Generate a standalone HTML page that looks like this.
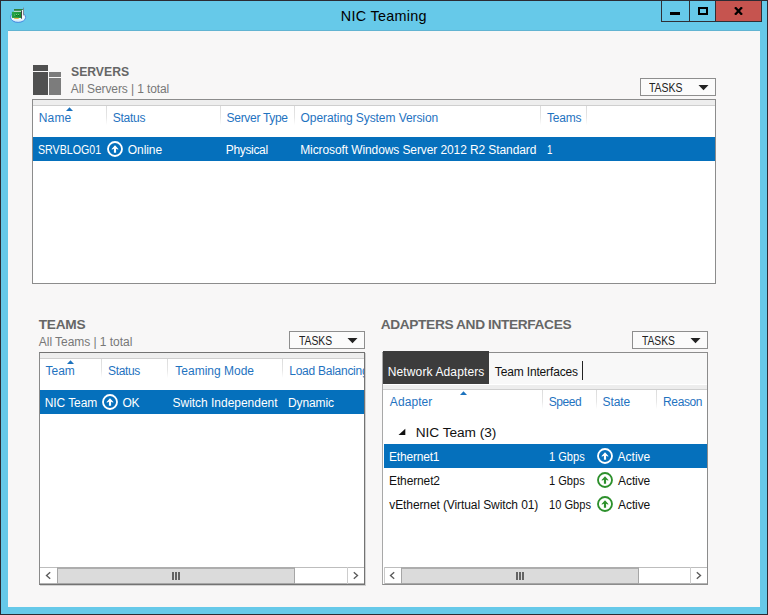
<!DOCTYPE html>
<html><head><meta charset="utf-8"><title>NIC Teaming</title>
<style>
html,body{margin:0;padding:0;}
body{width:768px;height:615px;overflow:hidden;position:relative;background:#66c9e9;font-family:"Liberation Sans",sans-serif;}
body>div,body>svg,body>span{position:absolute;display:block;}
.t{white-space:pre;line-height:20px;height:20px;}
</style></head><body>
<div style="left:0px;top:0px;width:768px;height:615px;background:#66c9e9;"></div>
<div style="left:0px;top:0px;width:768px;height:1px;background:#2b2b33;"></div>
<div style="left:0px;top:0px;width:1px;height:615px;background:#2b2b33;"></div>
<div style="left:767px;top:0px;width:1px;height:615px;background:#2b2b33;"></div>
<div style="left:0px;top:614px;width:768px;height:1px;background:#2b2b33;"></div>
<div style="left:8px;top:30px;width:752px;height:1px;background:#62b4d2;"></div>
<div style="left:8px;top:31px;width:752px;height:576px;background:#f8f7f7;"></div>
<div style="left:661px;top:1px;width:101px;height:21px;background:#2f2f35;"></div>
<div style="left:662px;top:1px;width:27px;height:20px;background:#66c9e9;"></div>
<div style="left:690px;top:1px;width:25px;height:20px;background:#66c9e9;"></div>
<div style="left:716px;top:1px;width:45px;height:20px;background:#c6544f;"></div>
<div style="left:670px;top:12px;width:10px;height:3px;background:#000;"></div>
<div style="left:698px;top:7px;width:6px;height:4px;border:2px solid #000"></div>
<svg style="left:734px;top:7px" width="9" height="8" viewBox="0 0 9 8"><path d="M1 0.3L8 7.7M8 0.3L1 7.7" stroke="#000" stroke-width="2.3" fill="none"/></svg>
<svg style="left:6px;top:4px" width="24" height="22" viewBox="6 4 24 22"><defs><linearGradient id="ig" x1="0" y1="0" x2="0" y2="1"><stop offset="0" stop-color="#ffffff"/><stop offset="0.75" stop-color="#e4f3fb"/><stop offset="1" stop-color="#bfe0f7"/></linearGradient><linearGradient id="gg" x1="0" y1="0" x2="1" y2="1"><stop offset="0" stop-color="#2aa84a"/><stop offset="1" stop-color="#0f8a2c"/></linearGradient></defs><ellipse cx="18.1" cy="17.3" rx="7.5" ry="5.1" fill="url(#ig)" stroke="#3a80e0" stroke-width="0.9"/><rect x="14" y="9" width="8.8" height="1.9" fill="#2f7f3e"/><rect x="14" y="10.9" width="8" height="1" fill="#e9efe9"/><rect x="22" y="10" width="1.1" height="6" fill="#f4f6f6"/><rect x="11.9" y="11.8" width="9.2" height="6.1" fill="url(#gg)"/><rect x="14" y="14.6" width="0.9" height="0.9" fill="#7fd48a"/><rect x="16" y="14" width="0.9" height="0.9" fill="#8fdc98"/><rect x="18" y="14" width="0.9" height="0.9" fill="#7fd48a"/><rect x="16" y="15.2" width="0.9" height="0.8" fill="#0a5a20"/><rect x="18" y="15.2" width="0.9" height="0.8" fill="#0a5a20"/><rect x="21" y="11" width="0.9" height="7.7" fill="#353535"/><rect x="23.1" y="7.6" width="0.8" height="7.8" fill="#7a7a82"/><rect x="14.2" y="17.9" width="4.5" height="0.9" fill="#e9a91a"/></svg>
<div style="left:33px;top:65px;width:15px;height:6px;background:#505050;"></div>
<div style="left:33px;top:72px;width:15px;height:23px;background:#505050;"></div>
<div style="left:49px;top:72px;width:12px;height:5px;background:#7c7c7c;"></div>
<div style="left:49px;top:78px;width:12px;height:17px;background:#7c7c7c;"></div>
<div style="left:640px;top:78px;width:74px;height:16px;background:#fbfbfb;border:1px solid #8e8e8e"></div><svg style="left:698px;top:85px" width="11" height="6" viewBox="0 0 11 6"><path d="M0.5 0H10.5L5.5 5.2Z" fill="#222"/></svg>
<div style="left:289px;top:331px;width:74px;height:16px;background:#fbfbfb;border:1px solid #8e8e8e"></div><svg style="left:347px;top:338px" width="11" height="6" viewBox="0 0 11 6"><path d="M0.5 0H10.5L5.5 5.2Z" fill="#222"/></svg>
<div style="left:632px;top:331px;width:74px;height:16px;background:#fbfbfb;border:1px solid #8e8e8e"></div><svg style="left:690px;top:338px" width="11" height="6" viewBox="0 0 11 6"><path d="M0.5 0H10.5L5.5 5.2Z" fill="#222"/></svg>
<div style="left:32px;top:99px;width:684px;height:185px;background:#fff;border:1px solid #8c8c8c;box-sizing:border-box;"></div>
<div style="left:33px;top:100px;width:682px;height:5px;background:#eeeeee;border-bottom:1px solid #cfcfcf;"></div>
<div style="left:106px;top:106px;width:1px;height:19px;background:linear-gradient(#dcdcdc,#e6e6e6 60%,#ffffff)"></div>
<div style="left:220px;top:106px;width:1px;height:19px;background:linear-gradient(#dcdcdc,#e6e6e6 60%,#ffffff)"></div>
<div style="left:294px;top:106px;width:1px;height:19px;background:linear-gradient(#dcdcdc,#e6e6e6 60%,#ffffff)"></div>
<div style="left:540px;top:106px;width:1px;height:19px;background:linear-gradient(#dcdcdc,#e6e6e6 60%,#ffffff)"></div>
<div style="left:586px;top:106px;width:1px;height:19px;background:linear-gradient(#dcdcdc,#e6e6e6 60%,#ffffff)"></div>
<svg style="left:66.0px;top:107px" width="7" height="4" viewBox="0 0 7 4"><path d="M0 4L3.5 0.2L7 4Z" fill="#1c72bd"/></svg>
<div style="left:33px;top:137px;width:682px;height:24px;background:#0570bc;"></div>
<svg style="left:107px;top:141px" width="16" height="16" viewBox="0 0 16 16"><circle cx="8" cy="8" r="7.0" fill="none" stroke="#fff" stroke-width="1.85"/><path d="M8 4.2L11.4 8.0Q11.5 8.7 10.8 8.6L9.1 7.7V11.8H6.9V7.7L5.2 8.6Q4.5 8.7 4.6 8.0Z" fill="#fff"/></svg>
<div style="left:39px;top:352px;width:326px;height:233px;background:#fff;border:1px solid #737373;border-left-color:#8a8a8a;box-sizing:border-box;box-shadow:1px 1px 0 #d2d2d2;"></div>
<div style="left:40px;top:353px;width:324px;height:5px;background:#eeeeee;border-bottom:1px solid #cfcfcf;"></div>
<div style="left:101px;top:359px;width:1px;height:19px;background:linear-gradient(#dcdcdc,#e6e6e6 60%,#ffffff)"></div>
<div style="left:167px;top:359px;width:1px;height:19px;background:linear-gradient(#dcdcdc,#e6e6e6 60%,#ffffff)"></div>
<div style="left:282px;top:359px;width:1px;height:19px;background:linear-gradient(#dcdcdc,#e6e6e6 60%,#ffffff)"></div>
<svg style="left:67.0px;top:360px" width="7" height="4" viewBox="0 0 7 4"><path d="M0 4L3.5 0.2L7 4Z" fill="#1c72bd"/></svg>
<div style="left:40px;top:390px;width:324px;height:24px;background:#0570bc;"></div>
<svg style="left:102px;top:394px" width="16" height="16" viewBox="0 0 16 16"><circle cx="8" cy="8" r="7.0" fill="none" stroke="#fff" stroke-width="1.85"/><path d="M8 4.2L11.4 8.0Q11.5 8.7 10.8 8.6L9.1 7.7V11.8H6.9V7.7L5.2 8.6Q4.5 8.7 4.6 8.0Z" fill="#fff"/></svg>
<div style="left:40px;top:567px;width:324px;height:17px;background:#fff;border-top:1px solid #bdbdbd;border-bottom:1px solid #b4b4b4;box-sizing:border-box;"></div>
<div style="left:347px;top:567px;width:1px;height:17px;background:#cdcdcd;"></div>
<div style="left:57px;top:567px;width:238px;height:17px;background:#dbdbdb;border:1px solid #a6a6a6;border-top:2px solid #adadad;box-sizing:border-box;"></div>
<svg style="left:40px;top:567px" width="17" height="17" viewBox="0 0 17 17"><path d="M10.2 5.3L6.5 8.5L10.2 11.7" fill="none" stroke="#5a5a5a" stroke-width="1.35"/></svg>
<svg style="left:347px;top:567px" width="17" height="17" viewBox="0 0 17 17"><path d="M6.8 5.3L10.5 8.5L6.8 11.7" fill="none" stroke="#5a5a5a" stroke-width="1.35"/></svg>
<div style="left:172px;top:572px;width:2px;height:8px;background:#636363;"></div>
<div style="left:175px;top:572px;width:2px;height:8px;background:#636363;"></div>
<div style="left:178px;top:572px;width:2px;height:8px;background:#636363;"></div>
<div style="left:382px;top:352px;width:326px;height:233px;background:#fff;border:1px solid #8c8c8c;border-left-color:#a8a8a8;box-sizing:border-box;"></div>
<div style="left:383px;top:353px;width:324px;height:31px;background:#f8f8f8;"></div>
<div style="left:383px;top:351px;width:106px;height:33px;background:#3c3c3c;"></div>
<div style="left:582px;top:361px;width:1px;height:19px;background:#222;"></div>
<div style="left:383px;top:384px;width:324px;height:1px;background:#fff;"></div>
<div style="left:383px;top:385px;width:324px;height:4px;background:#ededed;border-bottom:1px solid #cfcfcf;"></div>
<div style="left:542px;top:390px;width:1px;height:19px;background:linear-gradient(#dcdcdc,#e6e6e6 60%,#ffffff)"></div>
<div style="left:596px;top:390px;width:1px;height:19px;background:linear-gradient(#dcdcdc,#e6e6e6 60%,#ffffff)"></div>
<div style="left:656px;top:390px;width:1px;height:19px;background:linear-gradient(#dcdcdc,#e6e6e6 60%,#ffffff)"></div>
<svg style="left:460.0px;top:391px" width="7" height="4" viewBox="0 0 7 4"><path d="M0 4L3.5 0.2L7 4Z" fill="#1c72bd"/></svg>
<svg style="left:398px;top:428px" width="8" height="8" viewBox="0 0 8 8"><path d="M0.5 7L7.3 0.7V7Z" fill="#111"/></svg>
<div style="left:384px;top:444px;width:323px;height:24px;background:#0570bc;"></div>
<svg style="left:597px;top:448px" width="16" height="16" viewBox="0 0 16 16"><circle cx="8" cy="8" r="7.0" fill="none" stroke="#fff" stroke-width="1.85"/><path d="M8 4.2L11.4 8.0Q11.5 8.7 10.8 8.6L9.1 7.7V11.8H6.9V7.7L5.2 8.6Q4.5 8.7 4.6 8.0Z" fill="#fff"/></svg>
<svg style="left:597px;top:472px" width="16" height="16" viewBox="0 0 16 16"><circle cx="8" cy="8" r="7.0" fill="none" stroke="#2d902c" stroke-width="1.85"/><path d="M8 4.2L11.4 8.0Q11.5 8.7 10.8 8.6L9.1 7.7V11.8H6.9V7.7L5.2 8.6Q4.5 8.7 4.6 8.0Z" fill="#2d902c"/></svg>
<svg style="left:597px;top:496px" width="16" height="16" viewBox="0 0 16 16"><circle cx="8" cy="8" r="7.0" fill="none" stroke="#2d902c" stroke-width="1.85"/><path d="M8 4.2L11.4 8.0Q11.5 8.7 10.8 8.6L9.1 7.7V11.8H6.9V7.7L5.2 8.6Q4.5 8.7 4.6 8.0Z" fill="#2d902c"/></svg>
<div style="left:384px;top:567px;width:323px;height:17px;background:#fff;border-top:1px solid #bdbdbd;border-bottom:1px solid #b4b4b4;box-sizing:border-box;"></div>
<div style="left:384px;top:567px;width:1px;height:17px;background:#c9c9c9;"></div>
<div style="left:690px;top:567px;width:1px;height:17px;background:#cdcdcd;"></div>
<div style="left:401px;top:567px;width:238px;height:17px;background:#dbdbdb;border:1px solid #a6a6a6;border-top:2px solid #adadad;box-sizing:border-box;"></div>
<svg style="left:384px;top:567px" width="17" height="17" viewBox="0 0 17 17"><path d="M10.2 5.3L6.5 8.5L10.2 11.7" fill="none" stroke="#5a5a5a" stroke-width="1.35"/></svg>
<svg style="left:690px;top:567px" width="17" height="17" viewBox="0 0 17 17"><path d="M6.8 5.3L10.5 8.5L6.8 11.7" fill="none" stroke="#5a5a5a" stroke-width="1.35"/></svg>
<div style="left:516px;top:572px;width:2px;height:8px;background:#636363;"></div>
<div style="left:519px;top:572px;width:2px;height:8px;background:#636363;"></div>
<div style="left:522px;top:572px;width:2px;height:8px;background:#636363;"></div>
<span class="t" id="t0" style="left:340.80px;top:6.01px;font-size:14.4px;color:#000;letter-spacing:0.288px;">NIC Teaming</span>
<span class="t" id="t1" style="left:71.10px;top:62.25px;font-size:13.7px;color:#666;transform:scaleX(0.8915);transform-origin:0 0;font-weight:bold;">SERVERS</span>
<span class="t" id="t2" style="left:70.80px;top:78.84px;font-size:12px;color:#777;letter-spacing:-0.100px;">All Servers | 1 total</span>
<span class="t" id="t3" style="left:648.60px;top:77.84px;font-size:12px;color:#222;transform:scaleX(0.8721);transform-origin:0 0;">TASKS</span>
<span class="t" id="t4" style="left:38.80px;top:107.84px;font-size:12px;color:#1f73bf;letter-spacing:0.161px;">Name</span>
<span class="t" id="t5" style="left:112.80px;top:107.84px;font-size:12px;color:#1f73bf;letter-spacing:-0.256px;">Status</span>
<span class="t" id="t6" style="left:226.55px;top:107.84px;font-size:12px;color:#1f73bf;letter-spacing:-0.298px;">Server Type</span>
<span class="t" id="t7" style="left:300.60px;top:107.84px;font-size:12px;color:#1f73bf;letter-spacing:-0.079px;">Operating System Version</span>
<span class="t" id="t8" style="left:547.00px;top:107.84px;font-size:12px;color:#1f73bf;letter-spacing:-0.186px;">Teams</span>
<span class="t" id="t9" style="left:38.10px;top:139.84px;font-size:12px;color:#fff;transform:scaleX(0.8868);transform-origin:0 0;">SRVBLOG01</span>
<span class="t" id="t10" style="left:127.80px;top:139.84px;font-size:12px;color:#fff;letter-spacing:-0.087px;">Online</span>
<span class="t" id="t11" style="left:225.80px;top:139.84px;font-size:12px;color:#fff;letter-spacing:-0.348px;">Physical</span>
<span class="t" id="t12" style="left:300.20px;top:139.84px;font-size:12px;color:#fff;letter-spacing:-0.098px;">Microsoft Windows Server 2012 R2 Standard</span>
<span class="t" id="t13" style="left:547.20px;top:139.84px;font-size:12px;color:#fff;transform:scaleX(0.8075);transform-origin:0 0;">1</span>
<span class="t" id="t14" style="left:38.80px;top:315.25px;font-size:13.7px;color:#666;letter-spacing:-0.289px;font-weight:bold;">TEAMS</span>
<span class="t" id="t15" style="left:38.80px;top:332.24px;font-size:12px;color:#777;letter-spacing:-0.043px;">All Teams | 1 total</span>
<span class="t" id="t16" style="left:299.10px;top:330.84px;font-size:12px;color:#222;transform:scaleX(0.8630);transform-origin:0 0;">TASKS</span>
<span class="t" id="t17" style="left:45.55px;top:360.84px;font-size:12px;color:#1f73bf;letter-spacing:-0.031px;">Team</span>
<span class="t" id="t18" style="left:108.05px;top:360.84px;font-size:12px;color:#1f73bf;letter-spacing:-0.356px;">Status</span>
<span class="t" id="t19" style="left:175.30px;top:360.84px;font-size:12px;color:#1f73bf;letter-spacing:0.003px;">Teaming Mode</span>
<span class="t" id="t20" style="left:289.30px;top:360.84px;font-size:12px;color:#1f73bf;letter-spacing:-0.264px;width:74.70px;overflow:hidden;">Load Balancing</span>
<span class="t" id="t21" style="left:44.80px;top:392.84px;font-size:12px;color:#fff;letter-spacing:-0.092px;">NIC Team</span>
<span class="t" id="t22" style="left:122.55px;top:392.84px;font-size:12px;color:#fff;letter-spacing:-0.344px;">OK</span>
<span class="t" id="t23" style="left:172.55px;top:392.84px;font-size:12px;color:#fff;letter-spacing:-0.025px;">Switch Independent</span>
<span class="t" id="t24" style="left:288.05px;top:392.84px;font-size:12px;color:#fff;letter-spacing:-0.115px;">Dynamic</span>
<span class="t" id="t25" style="left:380.80px;top:315.25px;font-size:13.7px;color:#666;letter-spacing:-0.364px;font-weight:bold;">ADAPTERS AND INTERFACES</span>
<span class="t" id="t26" style="left:642.10px;top:330.84px;font-size:12px;color:#222;transform:scaleX(0.8565);transform-origin:0 0;">TASKS</span>
<span class="t" id="t27" style="left:387.80px;top:361.84px;font-size:12px;color:#fff;letter-spacing:0.119px;">Network Adapters</span>
<span class="t" id="t28" style="left:494.80px;top:361.84px;font-size:12px;color:#111;letter-spacing:-0.152px;">Team Interfaces</span>
<span class="t" id="t29" style="left:389.80px;top:392.24px;font-size:12px;color:#1f73bf;letter-spacing:0.078px;">Adapter</span>
<span class="t" id="t30" style="left:548.80px;top:392.24px;font-size:12px;color:#1f73bf;letter-spacing:-0.426px;">Speed</span>
<span class="t" id="t31" style="left:602.55px;top:392.24px;font-size:12px;color:#1f73bf;letter-spacing:-0.070px;">State</span>
<span class="t" id="t32" style="left:663.05px;top:392.24px;font-size:12px;color:#1f73bf;letter-spacing:-0.375px;">Reason</span>
<span class="t" id="t33" style="left:415.80px;top:423.25px;font-size:13.7px;color:#111;letter-spacing:-0.058px;">NIC Team (3)</span>
<span class="t" id="t34" style="left:389.05px;top:446.84px;font-size:12px;color:#fff;letter-spacing:-0.193px;">Ethernet1</span>
<span class="t" id="t35" style="left:549.30px;top:446.84px;font-size:12px;color:#fff;transform:scaleX(0.9224);transform-origin:0 0;">1 Gbps</span>
<span class="t" id="t36" style="left:617.55px;top:446.84px;font-size:12px;color:#fff;letter-spacing:0.013px;">Active</span>
<span class="t" id="t37" style="left:389.05px;top:470.84px;font-size:12px;color:#111;letter-spacing:-0.131px;">Ethernet2</span>
<span class="t" id="t38" style="left:549.30px;top:470.84px;font-size:12px;color:#111;transform:scaleX(0.9224);transform-origin:0 0;">1 Gbps</span>
<span class="t" id="t39" style="left:618.05px;top:470.84px;font-size:12px;color:#111;letter-spacing:-0.087px;">Active</span>
<span class="t" id="t40" style="left:389.30px;top:494.84px;font-size:12px;color:#111;letter-spacing:-0.102px;">vEthernet (Virtual Switch 01)</span>
<span class="t" id="t41" style="left:549.30px;top:494.84px;font-size:12px;color:#111;transform:scaleX(0.9245);transform-origin:0 0;">10 Gbps</span>
<span class="t" id="t42" style="left:618.05px;top:494.84px;font-size:12px;color:#111;letter-spacing:-0.087px;">Active</span>
</body></html>
